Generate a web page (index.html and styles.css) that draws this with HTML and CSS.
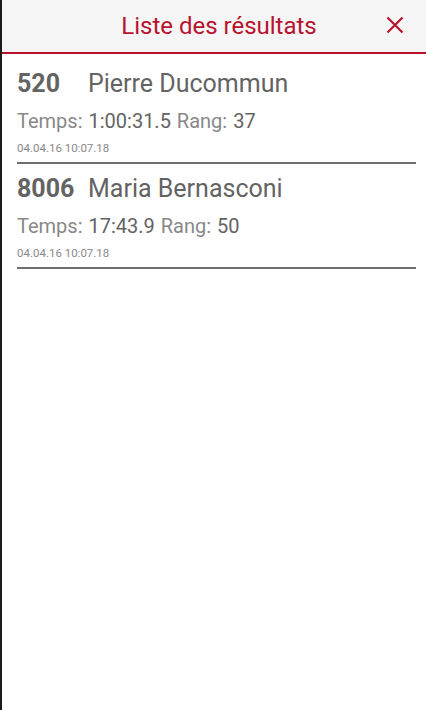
FILE: index.html
```html
<!DOCTYPE html>
<html lang="fr">
<head>
  <meta charset="UTF-8">
  <title>Liste des résultats</title>
  <meta name="viewport" content="width=device-width, initial-scale=1.0">
  <link rel="stylesheet" href="styles.css">
</head>

<body>
  <div class="screen">
    <!-- === HEADER === -->
    <header class="topbar">
      <h1 class="topbar-title">Liste des résultats</h1>
      <button class="close-btn" title="Fermer">
        <svg width="18" height="18" viewBox="0 0 18 18">
          <path d="M1.5 1.5 L16.5 16.5 M16.5 1.5 L1.5 16.5" stroke="currentColor" stroke-width="2.2" fill="none"/>
        </svg>
      </button>
    </header>

    <!-- === RESULTS LIST === -->
    <main class="results">
      <div class="result">
        <div class="result-head">
          <span class="bib">520</span>
          <span class="name">Pierre Ducommun</span>
        </div>
        <div class="result-stats">
          <span class="label">Temps:</span> <span class="value">1:00:31.5</span>
          <span class="label">Rang:</span> <span class="value">37</span>
        </div>
        <div class="result-date">04.04.16 10:07.18</div>
      </div>

      <div class="result">
        <div class="result-head">
          <span class="bib">8006</span>
          <span class="name">Maria Bernasconi</span>
        </div>
        <div class="result-stats">
          <span class="label">Temps:</span> <span class="value">17:43.9</span>
          <span class="label">Rang:</span> <span class="value">50</span>
        </div>
        <div class="result-date">04.04.16 10:07.18</div>
      </div>
    </main>
  </div>
</body>
</html>
```

FILE: styles.css
```css
:root {
  --accent: #b8132d;
  --text-dark: #636363;
  --text-light: #888888;
  --rule: #6f6f6f;
}

body {
  margin: 0;
  background: #1b1b1b;
  font-family: Roboto, "Noto Sans", sans-serif;
}

.screen {
  margin-left: 2px;
  min-height: 100vh;
  background: #ffffff;
}

.topbar {
  height: 52px;
  background: #f5f5f5;
  border-bottom: 2px solid var(--accent);
  display: flex;
  align-items: center;
  justify-content: flex-end;
  position: relative;
}

.topbar-title {
  position: absolute;
  left: 0;
  right: 0;
  margin: 0;
  padding-left: 10px;
  text-align: center;
  font-size: 24px;
  line-height: 30px;
  font-weight: 400;
  color: var(--accent);
}

.close-btn {
  position: relative;
  background: none;
  border: 0;
  padding: 0;
  margin-right: 22px;
  margin-bottom: 2px;
  color: var(--accent);
  display: flex;
  cursor: pointer;
}

.results {
  padding: 0 10px 0 15px;
}

.result {
  padding: 15px 0 6px;
  border-bottom: 2px solid var(--rule);
}

.result + .result {
  padding-top: 10px;
}

.result-head {
  display: flex;
  font-size: 25px;
  line-height: 30px;
  color: var(--text-dark);
}

.bib {
  width: 71px;
  font-weight: 700;
}

.result-stats {
  margin-top: 9px;
  font-size: 20px;
  line-height: 26px;
  word-spacing: 1px;
}

.label {
  color: var(--text-light);
}

.value {
  color: var(--text-dark);
}

.result-date {
  margin-top: 7px;
  font-size: 11.5px;
  line-height: 15px;
  color: var(--text-light);
}
```
